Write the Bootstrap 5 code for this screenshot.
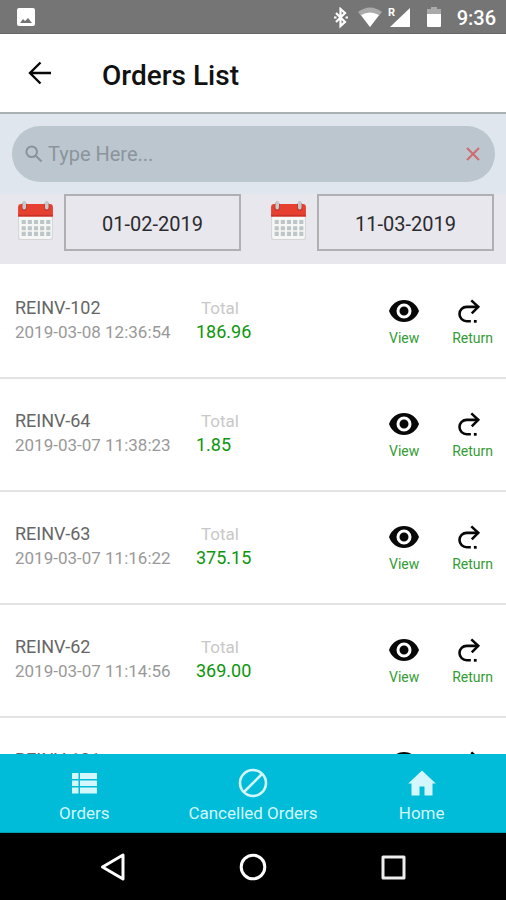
<!DOCTYPE html>
<html lang="en">
<head>
<meta charset="utf-8">
<meta name="viewport" content="width=device-width, initial-scale=1">
<title>Orders List</title>
<link href="https://cdn.jsdelivr.net/npm/bootstrap@5.3.0/dist/css/bootstrap.min.css" rel="stylesheet">
<style>
body{font-family:Roboto,"Liberation Sans",sans-serif;background:#fff}
svg{display:block;flex:none}
button{border:0;background:none;padding:0;color:inherit}
.screen{height:100vh}
.status-bar{height:34px;background:#757575;border-bottom:1px solid #666;font-size:20px;font-weight:500;padding:2px 10px 0 16px}
.app-bar{height:80px;padding:0 24px;border-bottom:2px solid #a9b1b4}
.app-bar h1{font-size:28px;font-weight:500;line-height:32px;color:#111;margin-left:46px;padding-top:5px}
.search-wrap{background:#e0e6ee;padding:12px 11px 12px 12px}
.search-pill{height:56px;border-radius:28px;background:#bbc6cf;padding:0 14px 0 13px}
.search-pill input{font-size:20px;line-height:24px;color:#555;padding:0 5px}
.search-pill input::placeholder{color:#8b949c;opacity:1}
.date-wrap{background:#e8e7ed;padding-bottom:13px}
.date-cell{padding:0 12px 0 17px;gap:10px}
.date-cell label{margin-top:-4px}
.date-cell input{height:57px;border:2px solid #b0b0b3;background:transparent;font-size:20px;color:#2b2b2f;border-radius:0;padding-top:3px}
.order-list{padding-top:2px}
.order{height:113px;border-bottom:2px solid #e3e3e3;padding:30px 13px 0 15px}
.order-info{width:181px}
.order-id,.order-total{font-size:18px;line-height:24px}
.order-id{color:#666}
.order-date,.total-label{font-size:17px;line-height:24px}
.order-date{color:#999}
.total-label{color:#c8c8c8;padding-left:5px}
.order-total{color:#0c960c}
.order-actions{gap:32px;padding-top:3px}
.order-actions button{font-size:14px;line-height:18px;color:#339c33}
.order-actions svg{margin-bottom:6px}
.return-icon{margin-right:8px}
.tabs{height:79px;background:#00bcd9;color:#d3f7fc;border-bottom:1px solid #00a0b8}
.tabs a{color:inherit;font-size:17px;line-height:20px;padding-top:14px}
.tabs svg{margin-bottom:5px}
.system-nav{height:67px;padding:0 43px}
</style>
<script src="https://cdn.jsdelivr.net/npm/bootstrap@5.3.0/dist/js/bootstrap.bundle.min.js"></script>
</head>
<body>
<svg class="d-none" aria-hidden="true">
<symbol id="eye" viewBox="0 0 32 24"><path fill="#080808" fill-rule="evenodd" d="M16 1C9 1 3.200 5.500 1 12c2.200 6.500 8 11 15 11s12.800-4.500 15-11C28.800 5.500 23 1 16 1zm0 18.500a7.500 7.500 0 1 1 0-15 7.500 7.500 0 0 1 0 15zM16 7.500a4.500 4.500 0 1 0 0 9 4.500 4.500 0 0 0 0-9z"/></symbol>
<symbol id="return" viewBox="0 0 26 26"><g fill="none" stroke="#080808" stroke-width="2.800"><path d="M23 8.500H10.500a7.800 7.800 0 0 0 0 15.600h4.500"/><path d="M15.500 1.500l7.500 7-7 7"/></g><path d="M18.300 22.700h3v3h-3z"/></symbol>
<symbol id="calendar" viewBox="0 0 36 40"><path fill="#d5d5d7" d="M1 14h34v23a2 2 0 0 1-2 2H3a2 2 0 0 1-2-2z"/><path fill="#f6f6f4" d="M2 14h32v22a2 2 0 0 1-2 2H4a2 2 0 0 1-2-2z"/><path fill="#e64030" d="M1 16V7a3 3 0 0 1 3-3h28a3 3 0 0 1 3 3v9z"/><path fill="#ca3428" d="M1 14.500h34V16H1z"/><path stroke="#bd3a31" stroke-width="5" stroke-linecap="round" d="M7 5v3M29 5v3"/><path stroke="#c5c9cb" stroke-width="3.500" stroke-linecap="round" d="M7 2.500v5M29 2.500v5"/><path stroke="#bcc5c7" stroke-width="4" stroke-dasharray="4 2" d="M4.500 21.500h28M4.500 27.500h28M4.500 33h28"/></symbol>
</svg>
<div class="screen d-flex flex-column overflow-hidden">
<div class="status-bar d-flex align-items-center text-white flex-shrink-0">
<svg width="20" height="20" viewBox="0 0 20 20"><path fill="#fff" fill-rule="evenodd" d="M3 0h14a2 2 0 0 1 2 2v14a2 2 0 0 1-2 2H3a2 2 0 0 1-2-2V2a2 2 0 0 1 2-2zm1 15h12l-4-5-3 3-2-2z"/></svg>
<svg class="ms-auto" width="16" height="22" viewBox="0 0 16 22"><path fill="none" stroke="#fff" stroke-width="2.200" d="M3 6l9 9-4.500 4V2l4.500 4-9 9"/><path fill="#fff" d="M1 9.500h2.500v2H1zM12.500 9.500H15v2h-2.500z"/></svg>
<svg class="ms-2" width="26" height="22" viewBox="0 0 26 22"><path fill="#aaa" d="M1 5q12-9 24 0L13 20z"/><path fill="#fff" d="M4 8q9-5 18 0l-9 12z"/></svg>
<svg class="ms-1" width="24" height="22" viewBox="0 0 24 22"><path fill="#fff" d="M23 1v19H3z"/><text x="1" y="9" font-size="11" font-weight="700" fill="#fff">R</text></svg>
<svg class="ms-3 me-3" width="14" height="22" viewBox="0 0 14 22"><path fill="#aaa" d="M4 0h6v2h4v5H0V2h4z"/><path fill="#fff" d="M0 7h14v12a1 1 0 0 1-1 1H1a1 1 0 0 1-1-1z"/></svg>
<span>9:36</span>
</div>
<header class="app-bar d-flex align-items-center flex-shrink-0">
<button type="button" aria-label="Back"><svg width="32" height="32" viewBox="0 0 32 32"><path fill="none" stroke="#080808" stroke-width="2.400" d="M27 16H6M16.500 5.500L6 16l10.500 10.500"/></svg></button>
<h1 class="mb-0">Orders List</h1>
</header>
<section class="flex-shrink-0" aria-label="Filters">
<div class="search-wrap">
<div class="search-pill d-flex align-items-center">
<svg width="18" height="18" viewBox="0 0 18 18"><g fill="none" stroke="#89939b" stroke-width="2"><circle cx="6.700" cy="6.700" r="5.300"/><path d="M10.500 10.500l6 6"/></g></svg>
<input class="flex-grow-1 border-0 bg-transparent" type="text" placeholder="Type Here..." aria-label="Search orders">
<button type="button" aria-label="Clear"><svg width="16" height="16" viewBox="0 0 16 16"><path stroke="#cf6b70" stroke-width="2" d="M2 2l12 12M14 2L2 14"/></svg></button>
</div>
</div>
<div class="date-wrap row g-0">
<div class="col-6"><div class="date-cell d-flex align-items-center"><label for="from" aria-label="From date"><svg width="37" height="41"><use href="#calendar"/></svg></label><input id="from" class="w-100 text-center" type="text" value="01-02-2019"></div></div>
<div class="col-6"><div class="date-cell d-flex align-items-center"><label for="to" aria-label="To date"><svg width="37" height="41"><use href="#calendar"/></svg></label><input id="to" class="w-100 text-center" type="text" value="11-03-2019"></div></div>
</div>
</section>
<main class="order-list flex-grow-1 overflow-hidden">
<article class="order d-flex"><div class="order-info"><div class="order-id">REINV-102</div><div class="order-date">2019-03-08 12:36:54</div></div><div><div class="total-label">Total</div><div class="order-total">186.96</div></div><div class="order-actions d-flex align-items-start ms-auto"><button type="button" class="d-flex flex-column align-items-center"><svg width="32" height="24"><use href="#eye"/></svg>View</button><button type="button" class="d-flex flex-column align-items-center"><svg class="return-icon" width="26" height="24"><use href="#return"/></svg>Return</button></div></article>
<article class="order d-flex"><div class="order-info"><div class="order-id">REINV-64</div><div class="order-date">2019-03-07 11:38:23</div></div><div><div class="total-label">Total</div><div class="order-total">1.85</div></div><div class="order-actions d-flex align-items-start ms-auto"><button type="button" class="d-flex flex-column align-items-center"><svg width="32" height="24"><use href="#eye"/></svg>View</button><button type="button" class="d-flex flex-column align-items-center"><svg class="return-icon" width="26" height="24"><use href="#return"/></svg>Return</button></div></article>
<article class="order d-flex"><div class="order-info"><div class="order-id">REINV-63</div><div class="order-date">2019-03-07 11:16:22</div></div><div><div class="total-label">Total</div><div class="order-total">375.15</div></div><div class="order-actions d-flex align-items-start ms-auto"><button type="button" class="d-flex flex-column align-items-center"><svg width="32" height="24"><use href="#eye"/></svg>View</button><button type="button" class="d-flex flex-column align-items-center"><svg class="return-icon" width="26" height="24"><use href="#return"/></svg>Return</button></div></article>
<article class="order d-flex"><div class="order-info"><div class="order-id">REINV-62</div><div class="order-date">2019-03-07 11:14:56</div></div><div><div class="total-label">Total</div><div class="order-total">369.00</div></div><div class="order-actions d-flex align-items-start ms-auto"><button type="button" class="d-flex flex-column align-items-center"><svg width="32" height="24"><use href="#eye"/></svg>View</button><button type="button" class="d-flex flex-column align-items-center"><svg class="return-icon" width="26" height="24"><use href="#return"/></svg>Return</button></div></article>
<article class="order d-flex"><div class="order-info"><div class="order-id">REINV-101</div></div><div><div class="total-label">Total</div></div><div class="order-actions d-flex align-items-start ms-auto"><button type="button" class="d-flex flex-column align-items-center"><svg width="32" height="24"><use href="#eye"/></svg>View</button><button type="button" class="d-flex flex-column align-items-center"><svg class="return-icon" width="26" height="24"><use href="#return"/></svg>Return</button></div></article>
</main>
<nav class="tabs row g-0 flex-shrink-0" aria-label="Main">
<a href="#orders" class="col-4 d-flex flex-column align-items-center text-decoration-none"><svg width="30" height="30" viewBox="0 0 30 30"><path fill="currentColor" d="M3 5h6.500v6H3zM11 5h17v6H11zM3 12.500h6.500v5.500H3zM11 12.500h17V18H11zM3 19.500h6.500v6H3zM11 19.500h17v6H11z"/></svg>Orders</a>
<a href="#cancelled" class="col-4 d-flex flex-column align-items-center text-decoration-none"><svg width="30" height="30" viewBox="0 0 30 30"><g fill="none" stroke="currentColor" stroke-width="2.600"><circle cx="15" cy="15" r="13"/><path d="M6 24L24 6"/></g></svg>Cancelled Orders</a>
<a href="#home" class="col-4 d-flex flex-column align-items-center text-decoration-none"><svg width="30" height="30" viewBox="0 0 30 30"><path fill="currentColor" d="M15 2.500L1.200 15.500H4.500V27.500H12.500V18.500H17.500V27.500H25.500V15.500H28.800z"/></svg>Home</a>
</nav>
<div class="system-nav bg-black d-flex align-items-center flex-shrink-0">
<button type="button" class="flex-fill d-flex justify-content-center" aria-label="System back"><svg width="28" height="30" viewBox="0 0 28 30"><path fill="none" stroke="#fff" stroke-width="3" stroke-linejoin="round" d="M24 3v24L3.500 15z"/></svg></button>
<button type="button" class="flex-fill d-flex justify-content-center" aria-label="System home"><svg width="28" height="28" viewBox="0 0 28 28"><circle cx="14" cy="14" r="11.800" fill="none" stroke="#fff" stroke-width="3"/></svg></button>
<button type="button" class="flex-fill d-flex justify-content-center" aria-label="Recent apps"><svg width="28" height="28" viewBox="0 0 28 28"><path fill="none" stroke="#eee" stroke-width="3" stroke-linejoin="round" d="M4 4h21v21H4z"/></svg></button>
</div>
</div>
</body>
</html>
